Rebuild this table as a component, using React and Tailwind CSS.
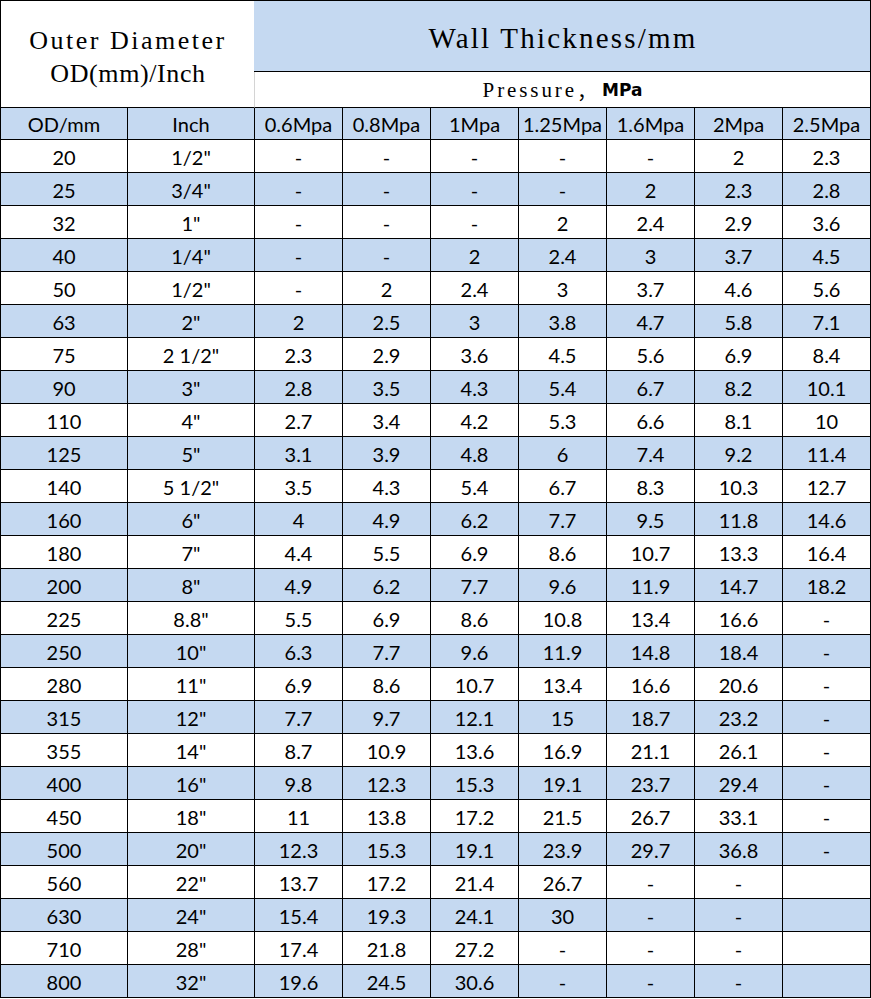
import React from "react";

const rows = [
  ["20", '1/2"', "-", "-", "-", "-", "-", "2", "2.3"],
  ["25", '3/4"', "-", "-", "-", "-", "2", "2.3", "2.8"],
  ["32", '1"', "-", "-", "-", "2", "2.4", "2.9", "3.6"],
  ["40", '1/4"', "-", "-", "2", "2.4", "3", "3.7", "4.5"],
  ["50", '1/2"', "-", "2", "2.4", "3", "3.7", "4.6", "5.6"],
  ["63", '2"', "2", "2.5", "3", "3.8", "4.7", "5.8", "7.1"],
  ["75", '2 1/2"', "2.3", "2.9", "3.6", "4.5", "5.6", "6.9", "8.4"],
  ["90", '3"', "2.8", "3.5", "4.3", "5.4", "6.7", "8.2", "10.1"],
  ["110", '4"', "2.7", "3.4", "4.2", "5.3", "6.6", "8.1", "10"],
  ["125", '5"', "3.1", "3.9", "4.8", "6", "7.4", "9.2", "11.4"],
  ["140", '5 1/2"', "3.5", "4.3", "5.4", "6.7", "8.3", "10.3", "12.7"],
  ["160", '6"', "4", "4.9", "6.2", "7.7", "9.5", "11.8", "14.6"],
  ["180", '7"', "4.4", "5.5", "6.9", "8.6", "10.7", "13.3", "16.4"],
  ["200", '8"', "4.9", "6.2", "7.7", "9.6", "11.9", "14.7", "18.2"],
  ["225", '8.8"', "5.5", "6.9", "8.6", "10.8", "13.4", "16.6", "-"],
  ["250", '10"', "6.3", "7.7", "9.6", "11.9", "14.8", "18.4", "-"],
  ["280", '11"', "6.9", "8.6", "10.7", "13.4", "16.6", "20.6", "-"],
  ["315", '12"', "7.7", "9.7", "12.1", "15", "18.7", "23.2", "-"],
  ["355", '14"', "8.7", "10.9", "13.6", "16.9", "21.1", "26.1", "-"],
  ["400", '16"', "9.8", "12.3", "15.3", "19.1", "23.7", "29.4", "-"],
  ["450", '18"', "11", "13.8", "17.2", "21.5", "26.7", "33.1", "-"],
  ["500", '20"', "12.3", "15.3", "19.1", "23.9", "29.7", "36.8", "-"],
  ["560", '22"', "13.7", "17.2", "21.4", "26.7", "-", "-", ""],
  ["630", '24"', "15.4", "19.3", "24.1", "30", "-", "-", ""],
  ["710", '28"', "17.4", "21.8", "27.2", "-", "-", "-", ""],
  ["800", '32"', "19.6", "24.5", "30.6", "-", "-", "-", ""],
];

const heads = ["OD/mm", "Inch", "0.6Mpa", "0.8Mpa", "1Mpa", "1.25Mpa", "1.6Mpa", "2Mpa", "2.5Mpa"];

export default function App() {
  return (
    <div className="w-[871px] h-[999px] bg-white text-black">
      <div className="border-l border-t border-black w-[871px]">
        <div className="flex">
          <div className="w-[253px] h-[107px] border-b border-black flex flex-col items-center justify-center pt-[6px] font-['Liberation_Serif',serif] text-[26px] leading-[33px]">
            <div className="tracking-[2.5px] pl-[1px]">Outer Diameter</div>
            <div className="tracking-[0.6px] pl-[1px]">OD(mm)/Inch</div>
          </div>
          <div className="w-[617px] flex flex-col">
            <div className="h-[71px] bg-[#c5d9f1] border-r border-b border-black flex items-center justify-center pt-[5px] pl-[2px] font-['Liberation_Serif',serif] text-[29px] tracking-[2.2px]">
              Wall Thickness/mm
            </div>
            <div className="h-[36px] border-l border-l-[#d4d4d4] border-r border-b border-black flex items-center justify-center pt-[2px] text-[21px]">
              <span className="font-['Liberation_Serif',serif] tracking-[2.9px]">Pressure</span>
              <span className="font-['Noto_Sans_CJK_SC',sans-serif] text-[20px] mr-[5px]">，</span>
              <span className="font-['DejaVu_Sans',sans-serif] font-bold text-[17px]">MPa</span>
            </div>
          </div>
        </div>
        <div className="grid grid-cols-[127px_127px_repeat(7,88px)] font-['Lato',sans-serif] text-[20px]">
          {heads.map((h, i) => (
            <div
              key={"h" + i}
              className="h-[32px] bg-[#c5d9f1] border-r border-b border-black flex items-center justify-center pt-[1px]"
            >
              {h}
            </div>
          ))}
          {rows.map((r, ri) =>
            r.map((c, ci) => (
              <div
                key={ri + "-" + ci}
                className={
                  "h-[33px] border-r border-b border-black flex items-center justify-center pt-[2px] " +
                  (ri % 2 === 1 ? "bg-[#c5d9f1]" : "bg-white")
                }
              >
                {c}
              </div>
            ))
          )}
        </div>
      </div>
    </div>
  );
}
